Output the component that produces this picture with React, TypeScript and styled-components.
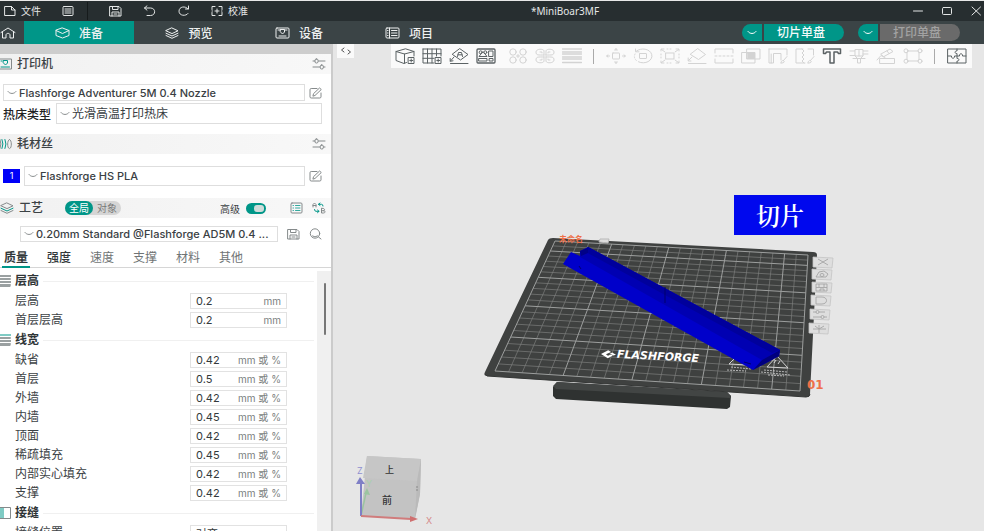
import React from "react";
import styled, { createGlobalStyle } from "styled-components";

const TEAL = "#009688";
const SANS = `Inter, "Noto Sans CJK SC", sans-serif`;

const GlobalStyle = createGlobalStyle`
  *, *::before, *::after { box-sizing: border-box; }
  body { margin: 0; background: #fff; font-family: ${SANS}; color: #3c4245; }
  button, input, select { font: inherit; color: inherit; margin: 0; padding: 0; border: 0; background: none; outline: 0; }
  svg { display: block; flex: none; }
`;

/* ---------- shell ---------- */
const Shell = styled.div`
  height: 100vh;
  display: flex;
  flex-direction: column;
  overflow: hidden;
  border-top: 1px solid #e8e8e8;
`;
const Body = styled.div`
  flex: 1;
  min-height: 0;
  display: flex;
`;

/* ---------- title bar ---------- */
const TitleBar = styled.header`
  height: 20px;
  flex: none;
  display: flex;
  align-items: center;
  background: #272e30;
  color: #e4e6e6;
  font-size: 10px;
`;
const TitleActions = styled.div`
  display: flex;
  align-items: center;
  gap: 21px;
  padding-left: 4px;
`;
const TitleButton = styled.button`
  display: flex;
  align-items: center;
  gap: 5px;
  line-height: 16px;
  white-space: nowrap;
`;
const TitleRule = styled.span`
  width: 1px;
  height: 18px;
  margin-left: -8px;
  background: #161b1c;
`;
const DocumentName = styled.h1`
  flex: 1;
  margin: 0;
  padding-right: 30px;
  text-align: center;
  font: 400 10px/16px "Noto Sans", sans-serif;
`;
const WindowButtons = styled.div`
  display: flex;
  gap: 17px;
  padding-right: 2px;
`;

/* ---------- tab bar ---------- */
const TabBar = styled.nav`
  height: 23px;
  flex: none;
  display: flex;
  align-items: center;
  background: #3b4446;
  color: #eef0f0;
`;
const HomeButton = styled.button`
  width: 24px;
  height: 23px;
  display: flex;
  align-items: center;
`;
const MainTab = styled.button<{ $active?: boolean }>`
  width: 110px;
  height: 23px;
  display: flex;
  align-items: center;
  justify-content: center;
  gap: 9px;
  font-size: 12px;
  font-weight: 500;
  background: ${(p) => (p.$active ? TEAL : "transparent")};
`;
const ActionGroup = styled.div`
  display: flex;
  gap: 14px;
  margin-left: auto;
  padding-right: 24px;
`;
const SplitAction = styled.div`
  display: flex;
  gap: 2px;
  height: 17px;
  border-radius: 9px;
  overflow: hidden;
`;
const SplitToggle = styled.button`
  width: 20px;
  display: grid;
  place-items: center;
  background: ${TEAL};
`;
const SplitMain = styled.button<{ $off?: boolean }>`
  width: 80px;
  padding-right: 6px;
  font-size: 12px;
  font-weight: 500;
  line-height: 17px;
  background: ${(p) => (p.$off ? "#6a6a6a" : TEAL)};
  color: ${(p) => (p.$off ? "#a2a2a2" : "#f4fafa")};
`;

/* ---------- sidebar ---------- */
const Sidebar = styled.aside`
  width: 333px;
  flex: none;
  display: flex;
  flex-direction: column;
  border-top: 10px solid #cdcdcd;
  border-right: 2px solid #cbcbcb;
  background: #fff;
  font-size: 12px;
`;
const SectionHeader = styled.div`
  height: 20px;
  flex: none;
  display: flex;
  align-items: center;
  gap: 5px;
  padding-right: 5px;
  background: linear-gradient(to right, #f1f1f1, #f8f8f8);
  > svg:last-child { margin-left: auto; }
`;
const SectionTitle = styled.h2`
  margin: 0;
  font-size: 12px;
  line-height: 20px;
  font-weight: 500;
`;
const Fields = styled.div<{ $roomy?: boolean }>`
  display: flex;
  flex-direction: column;
  gap: 2px;
  padding: ${(p) => (p.$roomy ? "12px 9px 12px 3px" : "10px 9px 10px 3px")};
`;
const FieldRow = styled.div`
  display: flex;
  align-items: center;
  gap: 4px;
`;
const FieldLabel = styled.label`
  width: 49px;
  font-weight: 500;
  color: #222;
`;
const SelectBox = styled.div<{ $h: number }>`
  flex: 1;
  min-width: 0;
  height: ${(p) => p.$h}px;
  display: flex;
  align-items: center;
  gap: 2px;
  padding-left: 3px;
  border: 1px solid #dedede;
`;
const NativeSelect = styled.select`
  flex: 1;
  min-width: 0;
  height: 100%;
  appearance: none;
  font-size: 11px;
  font-weight: 500;
  color: #3a4043;
  text-overflow: ellipsis;
`;
const BedSelect = styled(NativeSelect)`
  font-size: 12px;
  font-weight: 400;
`;
const IconButton = styled.button`
  flex: none;
  display: grid;
  place-items: center;
`;
const Swatch = styled.button`
  width: 17px;
  height: 14px;
  background: #0000f8;
  color: #fff;
  font-size: 9px;
  line-height: 14px;
`;
const Segments = styled.div`
  display: flex;
  height: 14px;
  margin-left: 17px;
  border-radius: 7px;
  background: #d5d5d5;
`;
const Segment = styled.button<{ $active?: boolean }>`
  width: 28px;
  border-radius: 7px;
  font-size: 10px;
  line-height: 14px;
  background: ${(p) => (p.$active ? TEAL : "transparent")};
  color: ${(p) => (p.$active ? "#fff" : "#777")};
`;
const AdvancedLabel = styled.label`
  display: flex;
  align-items: center;
  gap: 6px;
  margin-left: auto;
  margin-right: 19px;
  font-size: 10px;
`;
const Switch = styled.input`
  appearance: none;
  width: 20px;
  height: 11px;
  border-radius: 6px;
  background: ${TEAL};
  display: flex;
  justify-content: flex-end;
  padding: 2px;
  &::after {
    content: "";
    width: 10px;
    height: 7px;
    border-radius: 3px;
    background: #cfdcda;
  }
`;
const HeaderTools = styled.div`
  display: flex;
  gap: 9px;
`;
const PresetRow = styled.div`
  display: flex;
  align-items: center;
  gap: 9px;
  padding: 8px 9px 6px 20px;
`;
const ParamTabs = styled.div`
  flex: none;
  height: 20px;
  display: flex;
  gap: 15px;
  padding-left: 2px;
  border-bottom: 1px solid #d6d6d6;
`;
const ParamTab = styled.button<{ $level: number }>`
  width: 28px;
  height: 20px;
  font-size: 12px;
  line-height: 20px;
  font-weight: ${(p) => (p.$level === 2 ? 700 : p.$level === 1 ? 500 : 400)};
  color: ${(p) => (p.$level ? "#33393b" : "#6f7475")};
  box-shadow: ${(p) => (p.$level === 2 ? `inset 0 -2px ${TEAL}` : "none")};
`;
const ParamArea = styled.div`
  flex: 1;
  min-height: 0;
  display: flex;
  padding-top: 3px;
`;
const ParamList = styled.div`
  flex: 1;
  overflow: hidden;
`;
const ScrollTrack = styled.div`
  width: 14px;
  padding: 12px 0 0 7px;
  background: #f0f0f0;
`;
const ScrollThumb = styled.div`
  width: 2px;
  height: 52px;
  border-radius: 1px;
  background: #777;
`;
const GroupTitle = styled.h3`
  height: 20px;
  margin: 0;
  display: flex;
  align-items: center;
  gap: 4px;
  font-size: 12px;
  line-height: 20px;
  font-weight: 700;
  color: #2f3537;
  &:not(:first-child) { margin-top: 1px; }
  &::after {
    content: "";
    flex: 1;
    height: 1px;
    margin-right: 3px;
    background: #f0f0f0;
  }
`;
const ParamRow = styled.div`
  height: 19px;
  display: flex;
  align-items: center;
  padding: 0 30px 0 15px;
`;
const ParamLabel = styled.label`
  flex: 1;
  line-height: 18px;
`;
const ValueBox = styled.div`
  width: 97px;
  height: 16px;
  display: flex;
  align-items: center;
  padding: 0 5px;
  border: 1px solid #e2e2e2;
`;
const ValueInput = styled.input`
  flex: 1;
  min-width: 0;
  height: 14px;
  font-size: 11px;
  color: #33393b;
`;
const Unit = styled.span`
  font-size: 10px;
  line-height: 14px;
  color: #7b7f80;
`;

/* ---------- viewport ---------- */
const Viewport = styled.main`
  flex: 1;
  min-width: 0;
  position: relative;
  background: #e6e6e6;
`;
const Overlay = styled.div`
  position: absolute;
  inset: 0 12px auto 4px;
  display: flex;
  align-items: flex-start;
  justify-content: space-between;
`;
const FoldButton = styled.button`
  width: 17px;
  height: 14px;
  display: grid;
  place-items: center;
  background: #fafafa;
`;
const Toolbar = styled.div`
  height: 24px;
  display: flex;
  align-items: center;
  padding-right: 2px;
  background: #fafafa;
`;
const ToolButton = styled.button<{ $off?: boolean }>`
  width: 27px;
  height: 24px;
  display: grid;
  place-items: center;
  color: ${(p) => (p.$off ? "#d3d3d3" : "#5b6264")};
`;
const ToolGap = styled.span`
  width: 5px;
`;
const ToolRule = styled.span`
  width: 1px;
  height: 15px;
  margin: 0 8px;
  background: #aaa;
`;
const SceneSvg = styled.svg`
  width: 100%;
  height: 100%;
`;
const Callout = styled.div`
  position: absolute;
  left: 61.6%;
  top: 31%;
  padding: 0 22px;
  background: #0008ee;
  color: #fff;
  font: 600 24px/40px "Noto Serif CJK SC", "Noto Sans CJK SC", serif;
`;

/* ---------- icons ---------- */
type IconProps = { w?: number; h?: number; box?: string; sw?: number; color?: string; children: React.ReactNode };
const Icon = ({ w = 14, h = 12, box, sw = 1, color = "currentColor", children }: IconProps) => (
  <svg width={w} height={h} viewBox={box ?? `0 0 ${w} ${h}`} fill="none" stroke={color} strokeWidth={sw} strokeLinecap="round" strokeLinejoin="round" aria-hidden="true">
    {children}
  </svg>
);
const Chevron = ({ color = "#8b8f90" }: { color?: string }) => (
  <Icon w={10} h={6} color={color}><path d="M1 1.500C3 4.200 7 4.200 9 1.500" /></Icon>
);
const Sliders = () => (
  <Icon w={14} h={12} color="#858a8b">
    <path d="M1 3H3M6.500 3H13M1 9H8M11.500 9H13" /><rect x="3" y="1" width="3" height="4" rx="1.300" /><rect x="8.300" y="7" width="3" height="4" rx="1.300" />
  </Icon>
);
const Edit = () => (
  <Icon w={13} h={12} color="#858a8b">
    <path d="M8 1.500H2.200Q1 1.500 1 2.700V9.800Q1 11 2.200 11H10.800Q12 11 12 9.800V6" /><path d="M4 8.800L4.500 6.700 10.500 1 12.300 2.500 6.300 8.200Z" />
  </Icon>
);
const Save = ({ color = "currentColor" }: { color?: string }) => (
  <Icon w={13} h={12} color={color}>
    <path d="M1 1.500H10L12 3.500V11H1ZM3.500 1.500V4.500H9V1.500M3 11V7H10V11M5 9H8" />
  </Icon>
);
const Layers = ({ accent = "currentColor", color = "currentColor" }: { accent?: string; color?: string }) => (
  <Icon w={14} h={12} color={color}>
    <path d="M7 1L13 3.800 7 6.600 1 3.800Z" /><path d="M1 6.200L7 9 13 6.200" stroke={accent} /><path d="M1 8.500L7 11.300 13 8.500" />
  </Icon>
);
const Printer = () => (
  <Icon w={15} h={12}>
    <rect x="1" y="1" width="13" height="10" rx="1" /><path d="M3 3H5.500M9.500 3H12M4 9H11M5.500 2.500H9.500V5L7.500 7 5.500 5Z" />
  </Icon>
);
const LayerLines = ({ top }: { top: string }) => (
  <Icon w={11} h={12} color="#9aa0a1" sw={2}>
    <path d="M0 1H10.500" stroke={top} /><path d="M0 4H10M0 7H10.500M0 10H10" /><path d="M0 11.500H10" strokeWidth="1" />
  </Icon>
);
const Seam = () => (
  <Icon w={11} h={12} color="#858a8b"><path d="M0 .5H10.500V11.500H0" /><rect x="0" y="1" width="4" height="10" fill="#7fcbc4" stroke="none" /></Icon>
);

const plus = <path d="M13.500 9.500H19V15.500H13.500ZM16.200 11V14M14.800 12.500H17.700" />;
const brush = <path d="M19 8.500L15.500 12.500M13 15C13 12.500 15 12 16 13S15 15.500 13 15" />;
const glyphs: Record<string, React.ReactNode> = {
  添加: <><path d="M11.500 14.500L9 15.500 1 12.500V3.500L10.500 .8 19 3.500V8M1 3.500L9.500 6 19 3.500M9.500 6V15" />{plus}</>,
  添加盘: <><path d="M1 1H19V8M1 1V15H12M1 5.700H19M1 10.300H12M5.500 1V15M10 1V15M14.500 1V8" />{plus}</>,
  自动朝向: <><path d="M11 .8L19 6.500 11.500 12 3.500 6.500ZM5 9L1.500 13M1.200 10.500V13.300L4 12.800M1.500 15.500H19" /><path d="M8.500 8.500L9.500 4.500H12.500L13.500 8.500M9 6.800H13" /></>,
  自动摆放: <><rect x="1" y="1" width="18" height="14" rx="1" strokeWidth="1.300" /><path d="M13 3H17V8.500H13ZM3 10.500H11V13H3ZM13.500 10.500H17V13H13.500Z" /><circle cx="4.700" cy="4.300" r="1.500" /><circle cx="9.300" cy="4.300" r="1.500" /><path d="M6.500 4L3 8.500H11L7.500 4" /></>,
  拆分对象: <><circle cx="5" cy="4" r="3.200" /><circle cx="15" cy="4" r="3.200" /><circle cx="5" cy="12" r="3.200" /><circle cx="15" cy="12" r="3.200" /><path d="M10 6.500V9.500M8.500 8H11.500" /></>,
  拆分零件: <><path d="M9 7V3C9 .5 1 .5 1 4S3 7 9 7ZM11 7V3C11 .5 19 .5 19 4S17 7 11 7ZM9 9V13C9 15.500 1 15.500 1 12S3 9 9 9ZM11 9V13C11 15.500 19 15.500 19 12S17 9 11 9Z" /><path d="M5 4H7V5M15 4H13V5M5 12H7V11M15 12H13V11" /></>,
  可变层高: <path d="M.5 1H19.500M.5 4H19.500M.5 6H19.500M.5 9H19.500M.5 11H19.500M.5 14.500H19.500" strokeWidth="1.400" />,
  移动: <><rect x="6.500" y="5" width="7" height="6" rx=".5" /><path d="M10 .7V2.500M10 13.500V15.300M.7 8H3.500M16.500 8H19.300M8.500 2L10 .7 11.500 2M8.500 14L10 15.300 11.500 14M2 6.800L.7 8 2 9.200M18 6.800L19.300 8 18 9.200" /></>,
  旋转: <><rect x="6.500" y="5.500" width="7" height="5" rx=".5" /><path d="M3.500 3C8-.5 17 .5 18.700 6.500S12 17 5.500 13.800M2.500 1V3.800H6" /><path d="M2 6C.5 9 2 11.500 4 13" strokeDasharray="1 2" /></>,
  缩放: <><rect x="6" y="5" width="8" height="6" /><path d="M1 3V1H4M16 1H19V3M19 13V15H16M4 15H1V13M1.500 1.500L5 4M18.500 1.500L15 4M1.500 14.500L5 12M18.500 14.500L15 12" /><path d="M7 1H13M7 15H13M1 6V10M19 6V10" strokeDasharray="1 2" /></>,
  放置面: <><path d="M11 .8L18.500 6.500 11.500 11.500 3.500 6.500ZM5 9L1.500 12.500M1.200 10V13H4M1.500 15.500H19" /></>,
  剪切: <><path d="M1 5V1H19V5M1 11V15H19V11" /><path d="M1 8H19" strokeDasharray="2 2" /></>,
  布尔运算: <><rect x="1" y="4.500" width="13" height="10.500" /><rect x="6" y="1" width="13" height="10" /><rect x="6.500" y="5" width="7" height="5.500" fill="currentColor" /></>,
  支撑绘制: <><path d="M1 1H19V7M1 1V15H5.500V5.500H13V12M3.200 6V15" />{brush}</>,
  接缝绘制: <><path d="M10 15H1V1H8M7 1L9 3 7 5 9 7 7 9 9 11 7 13 9 15M13 1H18.500V7" />{brush}</>,
  文字: <path d="M1.500 1H18.500V5.500H16.500L15.500 4H12V15H8V4H4.500L3.500 5.500H1.500Z" strokeWidth="1.500" />,
  浮雕: <><path d="M1 3H6V1.500H14V3H19M6 3V8H14V3M1 7.500H6M14 6H19M6 8L8.500 10.500M14 8L11.500 10.500M8.500 10.500V15H11.500V10.500M4 10.500H16M10 1.500V8" /></>,
  测量: <><path d="M5 6L14 1 17 3.500 8 8.500ZM1 12L5 7.500 9 9.500M4 10.500H18.500V15.500H4ZM11 3L13 5.500" /></>,
  装配: <><path d="M4.500 3H15.500M4.500 13H15.500M4 4.500V11.500M16 4.500V11.500" /><circle cx="3" cy="2.800" r="2" /><circle cx="17" cy="2.800" r="2" /><circle cx="3" cy="13.200" r="2" /><circle cx="17" cy="13.200" r="2" /></>,
  组装视图: <><rect x="1" y="1" width="18" height="14" /><path d="M10 1V3C7.500 2.500 7.500 6 10 5.500V10.500C12.500 10 12.500 13.500 10 13V15M1 8H4.500C4 11 8 11 7.500 8H12.500C12 5 16 5 15.500 8H19" /></>,
};
const Tool = ({ name, off }: { name: string; off?: boolean }) => (
  <ToolButton $off={off} aria-label={name}><Icon w={20} h={16}>{glyphs[name]}</Icon></ToolButton>
);

/* ---------- 3D scene ---------- */
type Pt = [number, number];
/* Perspective map of the unit square on the build plate's four corners. */
const project = (c: [Pt, Pt, Pt, Pt]) => {
  const [[x0, y0], [x1, y1], [x2, y2], [x3, y3]] = c;
  const dx1 = x1 - x2, dx2 = x3 - x2, sx = x0 - x1 + x2 - x3;
  const dy1 = y1 - y2, dy2 = y3 - y2, sy = y0 - y1 + y2 - y3;
  const det = dx1 * dy2 - dx2 * dy1;
  const g = (sx * dy2 - dx2 * sy) / det;
  const h = (dx1 * sy - sx * dy1) / det;
  return (u: number, v: number): Pt => {
    const k = g * u + h * v + 1;
    return [
      ((x1 - x0 + g * x1) * u + (x3 - x0 + h * x3) * v + x0) / k,
      ((y1 - y0 + g * y1) * u + (y3 - y0 + h * y3) * v + y0) / k,
    ];
  };
};
const plate = project([[495, 371], [800, 391], [808, 255], [555, 241]]);
const CELLS = 22;
const segment = (a: Pt, b: Pt) => `M${a[0].toFixed(1)} ${a[1].toFixed(1)}L${b[0].toFixed(1)} ${b[1].toFixed(1)}`;
const gridPath = (major: boolean) =>
  Array.from({ length: CELLS + 1 }, (_, i) => i)
    .filter((i) => (i % 5 === 0 || i === CELLS) === major)
    .map((i) => segment(plate(i / CELLS, 0), plate(i / CELLS, 1)) + segment(plate(0, i / CELLS), plate(1, i / CELLS)))
    .join("");

const plateIcons: { x: number; y: number; d: string }[] = [
  { x: 813, y: 257, d: "M5 2L15 8M15 2L5 8" },
  { x: 812, y: 269, d: "M4 8L7 3 12 2 16 5 14 8ZM8 6A2 1.500 0 1 0 12 6 2 1.500 0 1 0 8 6" },
  { x: 812, y: 282, d: "M4 2H15V9H4ZM4 5.500H15M7 2V5M12 2V5M8 9V7H12V9" },
  { x: 811, y: 295, d: "M5 2H11C17 2 17 9 11 9H5Z" },
  { x: 810, y: 309, d: "M3 3H6M9 3H15M3 8H11M14 8H17M6 3A1.500 1.500 0 1 0 9 3 1.500 1.500 0 1 0 6 3M11 8A1.500 1.500 0 1 0 14 8 1.500 1.500 0 1 0 11 8" },
  { x: 809, y: 323, d: "M10 2V10M4 6H17M6 3L10 6 15 3" },
];

const Scene = () => (
  <SceneSvg viewBox="333 44 651 487" role="img" aria-label="MiniBoar3MF">
    <path d="M553 387L557 382 727 392 731 396 730 407 727 409 556 399 553 396Z" fill="#2f3231" />
    <path d="M553 386L557 382 727 392 731 396 730 398 556 389Z" fill="#424544" />
    <path d="M553 238L813 252Q817 252 817 255L810 394Q810 397 806 397L487 376Q483 376 485 372L548 240Q549 238 553 238Z" fill="#3f4140" />
    <path d="M485 374L487 376 806 397Q810 397 810 394" fill="none" stroke="#343635" />
    <path d={gridPath(false)} stroke="#7c7e7d" strokeWidth="0.700" fill="none" />
    <path d={gridPath(true)} stroke="#9d9f9e" strokeWidth="1" fill="none" />

    <g transform="rotate(3 602 354)">
      <path d="M601 354L608 350 611 351.500 606 354 608 355.500 611 354 613 355 608 358ZM612 352L616 354 613.500 355 611 353.500 609 354Z" fill="#fff" />
      <text x="617" y="357" fontFamily="DejaVu Sans, sans-serif" fontWeight="700" fontStyle="oblique" fontSize="11" fill="#fff">FLASHFORGE</text>
    </g>
    <g fill="none" stroke="#d4d4d4">
      <path d="M736 357L729 364 748 365ZM777 356L767 367 788 368ZM774 363L776 360M778 364L780 361" />
      <path d="M731 367L751 369M727 370L746 371M764 370L787 372M761 372L790 375M768 375L784 376" strokeDasharray="2 1" strokeWidth="0.800" />
    </g>

    <path d="M563 264L571 252 580 256 588 247 780 350 779 356 753 370Z" fill="#0000ca" />
    <path d="M580 251L588 247 780 350 762 360 580 257Z" fill="#0000b2" />
    <path d="M588 247L780 350 772 353 584 251Z" fill="#00009c" />
    <path d="M580 251L588 248 588 253 581 256Z" fill="#000088" />
    <path d="M780 350L779 356 753 370 762 360Z" fill="#00007e" />
    <path d="M665 287V303M579 266L581 269M744 362L751 364" stroke="#00006c" strokeWidth="1" />

    {plateIcons.map((t) => (
      <g key={t.y} transform={`translate(${t.x} ${t.y})`}>
        <path d="M0 0L20 1 19 11 0 10Z" fill="#dedede" stroke="#c4c4c4" strokeWidth="0.800" />
        <path d={t.d} stroke="#a5a5a5" strokeWidth="0.900" fill="none" />
      </g>
    ))}
    <path d="M600 239L609 239 608 243 599 242Z" fill="#ddd" stroke="#b9b9b9" />
    <text x="559" y="242" fontFamily="Noto Sans CJK SC, sans-serif" fontWeight="700" fontSize="8" fill="#ee7048">未命名</text>
    <text x="807" y="389" fontFamily="DejaVu Sans, sans-serif" fontWeight="700" fontSize="12" fill="#ee7048">01</text>

    <path d="M367 456L421 459 420 494 415 519 361 516Z" fill="#c3c3c3" />
    <path d="M367 456L421 459 417 481 363 478Z" fill="#c6c6c6" />
    <path d="M421 459L420 494 415 519 417 481Z" fill="#bababa" />
    <path d="M361 516L366 493" stroke="#9bc4a0" strokeWidth="1.500" />
    <path d="M364 494L367 488 370 495Z" fill="#9bc4a0" />
    <path d="M361 516V484" stroke="#7f7fc6" strokeWidth="2" />
    <path d="M356 484L360 477 365 484Z" fill="#7f7fc6" />
    <path d="M361 516L411 519" stroke="#d07c7c" strokeWidth="2" />
    <path d="M410 516L418 519 410 522Z" fill="#cf6f6f" />
    <g fontFamily="Inter, Noto Sans CJK SC, sans-serif" fontSize="9">
      <text x="357" y="474" fill="#8f8fd0">Z</text>
      <text x="366" y="487" fill="#a9cfad">Y</text>
      <text x="426" y="524" fill="#d58a8a">X</text>
      <text x="385" y="473" fill="#333" fontWeight="500">上</text>
      <text x="382" y="504" fontSize="10" fill="#333" fontWeight="500">前</text>
    </g>
    <path d="M417 486V492" stroke="#888" strokeDasharray="2 1" />
  </SceneSvg>
);

/* ---------- data ---------- */
const layerParams = [["层高", "0.2"], ["首层层高", "0.2"]];
const widthParams = [
  ["缺省", "0.42"], ["首层", "0.5"], ["外墙", "0.42"], ["内墙", "0.45"],
  ["顶面", "0.42"], ["稀疏填充", "0.45"], ["内部实心填充", "0.42"], ["支撑", "0.42"],
];
const Param = ({ id, label, value, unit }: { id: string; label: string; value: string; unit: string }) => (
  <ParamRow>
    <ParamLabel htmlFor={id}>{label}</ParamLabel>
    <ValueBox><ValueInput id={id} defaultValue={value} /><Unit>{unit}</Unit></ValueBox>
  </ParamRow>
);

export default function App() {
  return (
    <Shell>
      <GlobalStyle />
      <TitleBar>
        <TitleActions>
          <TitleButton>
            <Icon w={12} h={12}><path d="M1 1.500H7.500L11 5V10.500H1ZM7.500 1.500V5H11" /></Icon>文件
          </TitleButton>
          <TitleButton aria-label="菜单">
            <Icon w={12} h={12}><rect x="1" y="1.500" width="10" height="9" rx="1" /><path d="M3 4H9M3 6H9M3 8H9" /></Icon>
          </TitleButton>
          <TitleRule />
          <TitleButton aria-label="保存"><Save /></TitleButton>
          <TitleButton aria-label="撤销"><Icon w={13} h={12}><path d="M4 .8L1.500 3 4 5.200M1.500 3H7.500C13 3 13 10.500 7.500 10.500H4" /></Icon></TitleButton>
          <TitleButton aria-label="重做"><Icon w={13} h={12}><path d="M11.500 1V4H8.500M11 4C8.500 .5 2 1.500 2 6.200S9 11.500 11 8.500" /></Icon></TitleButton>
          <TitleButton>
            <Icon w={12} h={12}><path d="M4 1.500H1V4.500M8 1.500H11V4.500M11 7.500V10.500H8M4 10.500H1V7.500M6 4V8M4 6H8M1 6H1.500M10.500 6H11" /></Icon>校准
          </TitleButton>
        </TitleActions>
        <DocumentName>*MiniBoar3MF</DocumentName>
        <WindowButtons>
          <TitleButton aria-label="最小化"><Icon w={12} h={12}><path d="M1.500 6H10.500" /></Icon></TitleButton>
          <TitleButton aria-label="最大化"><Icon w={12} h={12}><rect x="1.500" y="2.500" width="9" height="7" rx="1" /></Icon></TitleButton>
          <TitleButton aria-label="关闭"><Icon w={12} h={12}><path d="M2 2L10.500 10M10.500 2L2 10" /></Icon></TitleButton>
        </WindowButtons>
      </TitleBar>

      <TabBar>
        <HomeButton aria-label="主页"><Icon w={16} h={12}><path d="M1 5.500L8 1 15 5.500M2.500 5V11H6V8C6 5.800 10 5.800 10 8V11H13.500V5" /></Icon></HomeButton>
        <MainTab $active><Icon w={15} h={12}><path d="M7.500 1L14 3.500V8.500L7.500 11 1 8.500V3.500ZM1 3.500L7.500 6.500 14 3.500" /></Icon>准备</MainTab>
        <MainTab><Layers />预览</MainTab>
        <MainTab><Printer />设备</MainTab>
        <MainTab><Icon w={15} h={12}><rect x="1" y="1" width="13" height="10" rx="1" /><path d="M4.500 1V11M2.500 3.500H3M2.500 6H3M2.500 8.500H3M6.500 3.500H12M6.500 6H12M6.500 8.500H12" /></Icon>项目</MainTab>
        <ActionGroup>
          <SplitAction>
            <SplitToggle aria-label="切片选项"><Chevron color="#fff" /></SplitToggle><SplitMain>切片单盘</SplitMain>
          </SplitAction>
          <SplitAction>
            <SplitToggle aria-label="打印选项"><Chevron color="#fff" /></SplitToggle><SplitMain $off>打印单盘</SplitMain>
          </SplitAction>
        </ActionGroup>
      </TabBar>

      <Body>
        <Sidebar>
          <SectionHeader>
            <Icon w={12} h={12} color="#858a8b"><path d="M0 1H11.500V11H0" /><path d="M3.500 2.500H7.500V5L5.500 7 3.500 5ZM1 9H9.500M1 3H2" stroke={TEAL} /></Icon>
            <SectionTitle>打印机</SectionTitle><Sliders />
          </SectionHeader>
          <Fields>
            <FieldRow>
              <SelectBox $h={17}><Chevron /><NativeSelect aria-label="打印机"><option>Flashforge Adventurer 5M 0.4 Nozzle</option></NativeSelect></SelectBox>
              <IconButton aria-label="编辑打印机"><Edit /></IconButton>
            </FieldRow>
            <FieldRow>
              <FieldLabel htmlFor="bed">热床类型</FieldLabel>
              <SelectBox $h={21}><Chevron /><BedSelect id="bed"><option>光滑高温打印热床</option></BedSelect></SelectBox>
            </FieldRow>
          </Fields>
          <SectionHeader>
            <Icon w={12} h={12} color="#858a8b"><path d="M0 1.500Q2 6 0 10.500M9.500 1.500C12 1.500 12 10.500 9.500 10.500S7 1.500 9.500 1.500" /><path d="M2 1.500Q4 6 2 10.500M5 1.500Q7 6 5 10.500" stroke={TEAL} /></Icon>
            <SectionTitle>耗材丝</SectionTitle><Sliders />
          </SectionHeader>
          <Fields $roomy>
            <FieldRow>
              <Swatch>1</Swatch>
              <SelectBox $h={20}><Chevron /><NativeSelect aria-label="耗材"><option>Flashforge HS PLA</option></NativeSelect></SelectBox>
              <IconButton aria-label="编辑耗材"><Edit /></IconButton>
            </FieldRow>
          </Fields>
          <SectionHeader>
            <Layers color="#858a8b" accent={TEAL} />
            <SectionTitle>工艺</SectionTitle>
            <Segments><Segment $active>全局</Segment><Segment>对象</Segment></Segments>
            <AdvancedLabel>高级<Switch type="checkbox" defaultChecked /></AdvancedLabel>
            <HeaderTools>
              <IconButton aria-label="参数列表"><Icon w={13} h={12} color="#858a8b"><rect x="1" y="1" width="11" height="10" rx="1" /><path d="M3 3.500H3.500M5.500 3.500H10M3 6H3.500M5.500 6H10M3 8.500H3.500M5.500 8.500H10" stroke={TEAL} strokeWidth="0.800" /></Icon></IconButton>
              <IconButton aria-label="比较预设">
                <Icon w={14} h={12} color="#858a8b"><path d="M1 5V2.500Q2.500 -.5 4 2.500V5M1 3.500H4M9.500 6.500V11H11.500C13.500 11 13.500 8.700 11.500 8.700 13 8.700 13 6.500 11.500 6.500ZM9.500 8.700H11.500" /><path d="M8 1L6.500 2.300 8 3.500M6.500 2.300H9.500Q11 2.300 11 4M2.500 7.500Q2.500 9.300 4 9.300H7M5.500 8L7 9.300 5.500 10.700" stroke={TEAL} /></Icon>
              </IconButton>
            </HeaderTools>
          </SectionHeader>
          <PresetRow>
            <SelectBox $h={16}><Chevron /><NativeSelect aria-label="工艺预设"><option>0.20mm Standard @Flashforge AD5M 0.4 ...</option></NativeSelect></SelectBox>
            <IconButton aria-label="保存预设"><Save color="#858a8b" /></IconButton>
            <IconButton aria-label="搜索"><Icon w={13} h={12} color="#858a8b"><circle cx="6" cy="5.500" r="4.700" /><path d="M9.500 9L12 11M3.500 8Q6 10 8.500 8" /></Icon></IconButton>
          </PresetRow>
          <ParamTabs>
            {["质量", "强度", "速度", "支撑", "材料", "其他"].map((t, i) => (
              <ParamTab key={t} $level={Math.max(0, 2 - i)}>{t}</ParamTab>
            ))}
          </ParamTabs>
          <ParamArea>
            <ParamList>
              <GroupTitle><LayerLines top="#9aa0a1" />层高</GroupTitle>
              {layerParams.map(([l, v]) => <Param key={l} id={`layer-${l}`} label={l} value={v} unit="mm" />)}
              <GroupTitle><LayerLines top="#7fcbc4" />线宽</GroupTitle>
              {widthParams.map(([l, v]) => <Param key={l} id={`width-${l}`} label={l} value={v} unit="mm 或 %" />)}
              <GroupTitle><Seam />接缝</GroupTitle>
              <Param id="seam-pos" label="接缝位置" value="对齐" unit="" />
            </ParamList>
            <ScrollTrack><ScrollThumb /></ScrollTrack>
          </ParamArea>
        </Sidebar>

        <Viewport>
          <Scene />
          <Callout>切片</Callout>
          <Overlay>
            <FoldButton aria-label="折叠侧栏"><Icon w={12} h={8} color="#555"><path d="M4 1L1.500 3 4 5M8 3L10.500 5 8 7" /></Icon></FoldButton>
            <Toolbar role="toolbar">
              {["添加", "添加盘", "自动朝向", "自动摆放"].map((n) => <Tool key={n} name={n} />)}
              <ToolGap />
              {["拆分对象", "拆分零件", "可变层高"].map((n) => <Tool key={n} name={n} off />)}
              <ToolRule />
              {["移动", "旋转", "缩放", "放置面", "剪切", "布尔运算", "支撑绘制", "接缝绘制"].map((n) => <Tool key={n} name={n} off />)}
              <Tool name="文字" />
              {["浮雕", "测量", "装配"].map((n) => <Tool key={n} name={n} off />)}
              <ToolRule />
              <Tool name="组装视图" />
            </Toolbar>
          </Overlay>
        </Viewport>
      </Body>
    </Shell>
  );
}
